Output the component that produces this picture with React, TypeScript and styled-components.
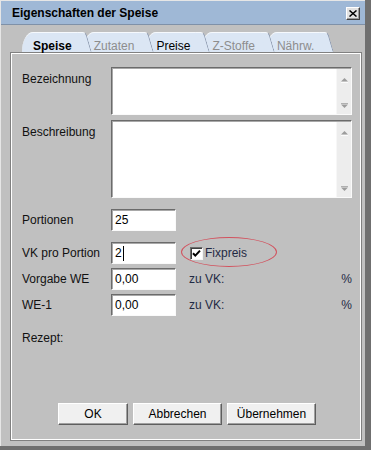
import React from "react";
import styled, { createGlobalStyle } from "styled-components";

const Global = createGlobalStyle`
  html, body { margin: 0; padding: 0; background: #6f6f6f; }
  body { font-family: "Liberation Sans", Arial, sans-serif; font-size: 12px; }
  * { box-sizing: border-box; }
`;

const Screen = styled.div`
  width: 371px;
  height: 450px;
  background: #6f6f6f;
  overflow: hidden;
`;

const Window = styled.div`
  width: 365px;
  height: 446px;
  background: #c0c0c0;
  border-left: 1px solid #e6e6e6;
  border-top: 1px solid #e6e6e6;
  display: flex;
  flex-direction: column;
`;

const TitleBar = styled.div`
  height: 24px;
  background: #9fb8d6;
  border-bottom: 1px solid #7f91a8;
  display: flex;
  align-items: center;
  padding: 0 5px 0 11px;
`;

const Title = styled.div`
  flex: 1;
  font-weight: bold;
  font-size: 12px;
  color: #000;
  padding-top: 1px;
`;

const CloseButton = styled.div`
  width: 14px;
  height: 13px;
  background: #e2e2e2;
  border-top: 1px solid #ffffff;
  border-left: 1px solid #ffffff;
  border-right: 1px solid #404040;
  border-bottom: 1px solid #404040;
  box-shadow: inset -1px -1px 0 #9a9a9a;
  display: flex;
  align-items: center;
  justify-content: center;
  margin-top: 1px;
`;

const Body = styled.div`
  flex: 1;
  display: flex;
  flex-direction: column;
  padding: 7px 3px 5px 9px;
`;

const TabRow = styled.div`
  display: flex;
  height: 20px;
  padding-left: 12px;
`;

const Tab = styled.div<{ $active?: boolean; $disabled?: boolean; $z: number }>`
  position: relative;
  height: 20px;
  padding: 6px 11px 0 11px;
  line-height: 14px;
  background: #dbe6f4;
  border-top: 1px solid #f6f9fd;
  border-top-left-radius: 11px 20px;
  color: ${(p) => (p.$disabled ? "#8d8d8d" : "#000")};
  font-weight: ${(p) => (p.$active ? "bold" : "normal")};
  z-index: ${(p) => p.$z};
  white-space: nowrap;
  &::after {
    content: "";
    position: absolute;
    top: -1px;
    right: -3px;
    width: 8px;
    bottom: 0;
    background: #dbe6f4;
    border-right: 1px solid #8f9bb0;
    border-top: 1px solid #f6f9fd;
    border-top-right-radius: 4px;
    transform: skewX(16deg);
    transform-origin: top;
  }
`;

const Panel = styled.div`
  flex: 1;
  border: 1px solid #808080;
  box-shadow: inset 0 0 0 1px #ffffff;
  display: flex;
  flex-direction: column;
  padding: 14px 9px 15px 11px;
`;

const Row = styled.div<{ $top?: number }>`
  display: flex;
  align-items: center;
  margin-top: ${(p) => p.$top ?? 0}px;
`;

const TopRow = styled(Row)`
  align-items: flex-start;
`;

const Label = styled.div<{ $pad?: number }>`
  width: 89px;
  flex: none;
  line-height: 14px;
  color: #111;
  padding-top: ${(p) => p.$pad ?? 0}px;
`;

const TextBox = styled.div<{ $h: number }>`
  flex: 1;
  height: ${(p) => p.$h}px;
  background: #fff;
  border-top: 1px solid #6b6b6b;
  border-left: 1px solid #6b6b6b;
  border-right: 1px solid #fafafa;
  border-bottom: 1px solid #fafafa;
  box-shadow: inset 1px 1px 0 #a8a8a8;
  display: flex;
  justify-content: flex-end;
  padding: 1px 0 0 1px;
`;

const ScrollTrack = styled.div`
  width: 15px;
  background: #ededed;
  border-left: 1px solid #f7f7f7;
  display: flex;
  flex-direction: column;
  justify-content: space-between;
  align-items: center;
  padding: 8px 0 5px 0;
`;

const Field = styled.div`
  width: 65px;
  height: 22px;
  flex: none;
  background: #fff;
  border-top: 1px solid #6b6b6b;
  border-left: 1px solid #6b6b6b;
  border-right: 1px solid #fafafa;
  border-bottom: 1px solid #fafafa;
  box-shadow: inset 1px 1px 0 #a8a8a8;
  padding: 0 0 0 3px;
  display: flex;
  align-items: center;
  color: #000;
`;

const Caret = styled.span`
  display: inline-block;
  width: 1px;
  height: 15px;
  background: #000;
  margin-left: 1px;
`;

const FixWrap = styled.div`
  position: relative;
  margin-left: 14px;
  display: flex;
  align-items: center;
  gap: 2px;
`;

const CheckBox = styled.div`
  width: 13px;
  height: 13px;
  background: #fff;
  border-top: 1px solid #6b6b6b;
  border-left: 1px solid #6b6b6b;
  border-right: 1px solid #f4f4f4;
  border-bottom: 1px solid #f4f4f4;
  box-shadow: inset 1px 1px 0 #404040;
  display: flex;
  align-items: center;
  justify-content: center;
`;

const Ellipse = styled.div`
  position: absolute;
  left: -9px;
  top: calc(50% - 16px);
  width: 96px;
  height: 30px;
  border: 1px solid #d2525e;
  border-radius: 50%;
  pointer-events: none;
`;

const Note = styled.div<{ $left?: number }>`
  color: #1f2a44;
  line-height: 14px;
  margin-left: ${(p) => p.$left ?? 0}px;
`;

const Spacer = styled.div`
  flex: 1;
`;

const Buttons = styled.div`
  margin-top: auto;
  display: flex;
  justify-content: center;
  gap: 5px;
`;

const Button = styled.div<{ $w: number }>`
  width: ${(p) => p.$w}px;
  height: 22px;
  background: #f0f0f0;
  border-top: 1px solid #ffffff;
  border-left: 1px solid #ffffff;
  border-right: 1px solid #5e5e5e;
  border-bottom: 1px solid #5e5e5e;
  box-shadow: inset -1px -1px 0 #a0a0a0;
  display: flex;
  align-items: center;
  justify-content: center;
  color: #000;
`;

const ArrowUp = () => (
  <svg width="9" height="6" viewBox="0 0 9 6">
    <path d="M1 4.5 L4.5 1 L8 4.5 Z" fill="#9c9c9c" />
    <line x1="1" y1="5.5" x2="8" y2="5.5" stroke="#fbfbfb" strokeWidth="1" />
  </svg>
);

const ArrowDown = () => (
  <svg width="9" height="6" viewBox="0 0 9 6">
    <line x1="1" y1="0.5" x2="8" y2="0.5" stroke="#b0b0b0" strokeWidth="1" />
    <path d="M1 1.5 L8 1.5 L4.5 5 Z" fill="#9c9c9c" />
  </svg>
);

const MultiLine = ({ h }: { h: number }) => (
  <TextBox $h={h}>
    <ScrollTrack>
      <ArrowUp />
      <ArrowDown />
    </ScrollTrack>
  </TextBox>
);

const tabs = [
  { label: "Speise", active: true },
  { label: "Zutaten", disabled: true },
  { label: "Preise" },
  { label: "Z-Stoffe", disabled: true },
  { label: "Nährw.", disabled: true },
];

export default function App() {
  return (
    <Screen>
      <Global />
      <Window>
        <TitleBar>
          <Title>Eigenschaften der Speise</Title>
          <CloseButton>
            <svg width="8" height="7" viewBox="0 0 8 7">
              <path d="M0.5 0.5 L7.5 6.5 M7.5 0.5 L0.5 6.5" stroke="#000" strokeWidth="1.5" />
            </svg>
          </CloseButton>
        </TitleBar>
        <Body>
          <TabRow>
            {tabs.map((t, i) => (
              <Tab key={t.label} $active={t.active} $disabled={t.disabled} $z={10 - i}>
                {t.label}
              </Tab>
            ))}
          </TabRow>
          <Panel>
            <TopRow>
              <Label $pad={5}>Bezeichnung</Label>
              <MultiLine h={48} />
            </TopRow>
            <TopRow $top={5}>
              <Label $pad={5}>Beschreibung</Label>
              <MultiLine h={78} />
            </TopRow>
            <Row $top={11}>
              <Label>Portionen</Label>
              <Field>25</Field>
            </Row>
            <Row $top={11}>
              <Label>VK pro Portion</Label>
              <Field>
                2<Caret />
              </Field>
              <FixWrap>
                <Ellipse />
                <CheckBox>
                  <svg width="9" height="9" viewBox="0 0 9 9">
                    <path d="M1 4.2 L3.3 6.6 L8 1.6" stroke="#000" strokeWidth="2" fill="none" />
                  </svg>
                </CheckBox>
                <Note>Fixpreis</Note>
              </FixWrap>
            </Row>
            <Row $top={4}>
              <Label>Vorgabe WE</Label>
              <Field>0,00</Field>
              <Note $left={13}>zu VK:</Note>
              <Spacer />
              <Note>%</Note>
            </Row>
            <Row $top={4}>
              <Label>WE-1</Label>
              <Field>0,00</Field>
              <Note $left={13}>zu VK:</Note>
              <Spacer />
              <Note>%</Note>
            </Row>
            <Row $top={15}>
              <Label>Rezept:</Label>
            </Row>
            <Buttons>
              <Button $w={70}>OK</Button>
              <Button $w={89}>Abbrechen</Button>
              <Button $w={89}>Übernehmen</Button>
            </Buttons>
          </Panel>
        </Body>
      </Window>
    </Screen>
  );
}
